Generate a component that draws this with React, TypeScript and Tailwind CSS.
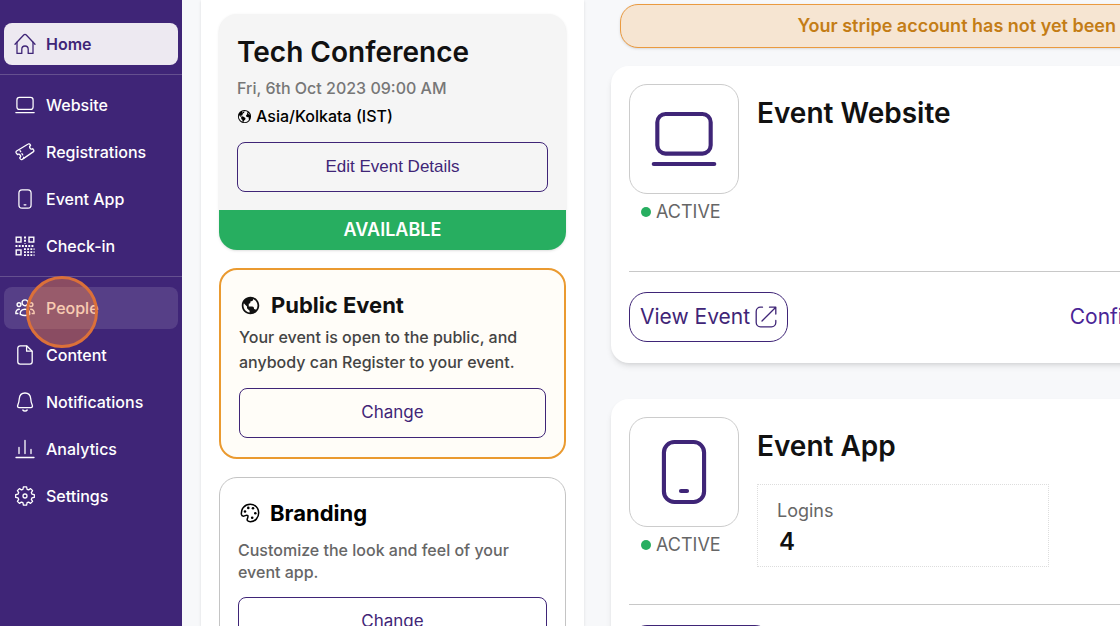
import React from "react";
import { IoEarth } from "react-icons/io5";
import { BiWorld } from "react-icons/bi";

const iconClass = "shrink-0 fill-none stroke-current";

const HomeIcon = () => (
	<svg width="22" height="22" viewBox="0 0 22 22" className={iconClass} strokeWidth="1.3" strokeLinejoin="round" strokeLinecap="round">
		<path d="M1 11.2 9.7 2a1.8 1.8 0 0 1 2.6 0L21 11.2" />
		<path d="M3 9.2V20.4h4.8v-4.2a3.2 3.2 0 0 1 6.4 0v4.2H19V9.2" />
	</svg>
);

const LaptopIcon = ({ size, stroke }: { size: number; stroke: number }) => (
	<svg width={size} height={size} viewBox="0 0 24 24" className={iconClass} strokeWidth={stroke} strokeLinecap="round">
		<rect x="2.3" y="2.9" width="19.4" height="14.4" rx="3" />
		<path d="M1 21.1h22" />
	</svg>
);

const PhoneIcon = ({ size, stroke }: { size: number; stroke: number }) => (
	<svg width={size} height={size} viewBox="0 0 24 24" className={iconClass} strokeWidth={stroke} strokeLinecap="round">
		<rect x="4.7" y="1.1" width="14.6" height="21.8" rx="3.8" />
		<path d="M10.9 18.9h2.2" />
	</svg>
);

const TicketIcon = () => (
	<svg width="20" height="20" viewBox="0 0 20 20" className={iconClass} strokeWidth="1.3" strokeLinejoin="round" strokeLinecap="round">
		<path d="M1.6 9 13.2 2a1.3 1.3 0 0 1 1.8.4l.6 1a1.9 1.9 0 0 0 2.1 3.3l.9 1.3a1.3 1.3 0 0 1-.4 1.9L7.2 17.4a1.3 1.3 0 0 1-1.8-.4l-.7-1.2a1.9 1.9 0 0 0-2.2-3.2l-1.3-1.8A1.3 1.3 0 0 1 1.6 9Z" />
		<path d="M5 8.6l.7 1.1M6.900 11.7l.8 1.2M8.600 15.200l.4.7" />
	</svg>
);

const QrIcon = () => (
	<svg width="20" height="20" viewBox="0 0 20 20" className={iconClass} strokeWidth="1.4">
		<rect x="1.2" y="1.2" width="4.8" height="4.8" />
		<rect x="14" y="1.2" width="4.8" height="4.8" />
		<rect x="1.2" y="14" width="4.8" height="4.8" />
		<path d="M10 .5v7" strokeWidth="2" strokeDasharray="2 1.2" />
		<path d="M.5 10h19M9 13.100h10.500M9 16.200h10.500M9 19.100h10.500" strokeWidth="1.800" strokeDasharray="1.900 1.300" />
	</svg>
);

const PeopleIcon = () => (
	<svg width="20" height="20" viewBox="0 0 20 20" className={iconClass} strokeWidth="1.4" strokeLinecap="round">
		<circle cx="10" cy="4.8" r="2.9" />
		<circle cx="4" cy="6.6" r="1.9" />
		<circle cx="16" cy="6.6" r="1.9" />
		<path d="M5.300 16.400c-.5-3.200 1.700-5.200 4.700-5.200s5.200 2 4.700 5.200c-2.600 1.300-6.800 1.300-9.400 0Z" />
		<path d="M4.300 11.200c-2.200 0-3.700 1.800-3.400 4.300h1.900M15.700 11.200c2.200 0 3.700 1.800 3.400 4.300h-1.900" />
	</svg>
);

const FileIcon = () => (
	<svg width="20" height="20" viewBox="0 0 20 20" className={iconClass} strokeWidth="1.3" strokeLinejoin="round">
		<path d="M11.6.8H5.200a2.400 2.400 0 0 0-2.400 2.400v13.600a2.400 2.400 0 0 0 2.400 2.400h9.600a2.400 2.400 0 0 0 2.400-2.400V6.200Z" />
		<path d="M11.6.8v5.400h5.600" />
	</svg>
);

const BellIcon = () => (
	<svg width="20" height="20" viewBox="0 0 20 20" className={iconClass} strokeWidth="1.3" strokeLinejoin="round" strokeLinecap="round">
		<path d="M10 1C6.600 1 4.600 3.500 4.300 6.500c-.2 3-.6 4.700-1.500 6.600-.7 1.500 0 2.500 1.400 2.500h11.600c1.400 0 2.100-1 1.400-2.500-.9-1.900-1.300-3.600-1.500-6.600C15.400 3.500 13.400 1 10 1Z" />
		<path d="M7.800 18c1 1.400 3.400 1.400 4.400 0" />
	</svg>
);

const ChartIcon = () => (
	<svg width="20" height="20" viewBox="0 0 20 20" className={iconClass} strokeWidth="1.3" strokeLinecap="round">
		<path d="M4 8.500v6M10 1.500v13M16 10.500v4M1 18.500h18" />
	</svg>
);

const GearIcon = () => (
	<svg width="20" height="20" viewBox="0 0 20 20" className={iconClass} strokeWidth="1.3" strokeLinejoin="round">
		<path d="M8.400.9h3.200l.5 2.400 1.500.6 2-1.300 2 2-1.300 2 .6 1.500 2.400.5v2.800l-2.400.5-.6 1.500 1.300 2-2 2-2-1.300-1.500.6-.5 2.400H8.400l-.5-2.400-1.500-.6-2 1.300-2-2 1.300-2-.6-1.500-2.400-.5V8.600l2.400-.5.600-1.500-1.300-2 2-2 2 1.300 1.500-.6Z" />
		<circle cx="10" cy="10" r="2" />
	</svg>
);

const PaletteIcon = () => (
	<svg width="20" height="20" viewBox="0 0 20 20" className={iconClass} strokeWidth="1.5" strokeLinejoin="round">
		<path d="M1.400 11.400C.8 5.600 4.800 1.300 10.200 1.300c4.900 0 8.500 3.700 8.500 8.500 0 5-3.600 8.900-8.300 8.900-2.600 0-3.800-1.400-3-3.100.5-1.100 1-2.200.3-3-1-1-2.300.2-3.700.5-1.300.2-2.400-.5-2.600-1.700Z" />
		<g className="fill-current stroke-none">
			<circle cx="5" cy="8.500" r="1.300" />
			<circle cx="8.300" cy="4.900" r="1.300" />
			<circle cx="13" cy="5.300" r="1.300" />
			<circle cx="15.300" cy="10.300" r="1.300" />
			<circle cx="12.200" cy="14.700" r="1.300" />
		</g>
	</svg>
);

const ExternalIcon = () => (
	<svg width="22" height="22" viewBox="0 0 22 22" className={iconClass} strokeWidth="1.3" strokeLinecap="round" strokeLinejoin="round">
		<path d="M7.500 1.200H5.500a4.300 4.300 0 0 0-4.300 4.300v11a4.300 4.300 0 0 0 4.300 4.300h11a4.300 4.300 0 0 0 4.300-4.300v-2" />
		<path d="M7 15 20.800 1.200M14.500 1.200h6.300V8" />
	</svg>
);

const NavItem = ({ icon, label, state = "" }: { icon: React.ReactNode; label: string; state?: string }) => (
	<a
		href="#"
		className={`mx-1 flex h-[42px] items-center gap-2 rounded-lg pl-2 text-base ${
			state === "active"
				? "bg-[#ede9f1] font-semibold text-[#3f2577]"
				: state === "hover"
				? "bg-white/12 font-medium text-white"
				: "font-medium text-white"
		}`}
	>
		<span className="flex w-[26px] justify-center">{icon}</span>
		{label}
	</a>
);

const Sidebar = () => (
	<nav className="relative w-[182px] shrink-0 bg-[#3f2577] pt-[23px]">
		<NavItem icon={<HomeIcon />} label="Home" state="active" />
		<hr className="my-[9px] border-[#65508f]" />
		<div className="flex flex-col gap-[5px]">
			<NavItem icon={<LaptopIcon size={20} stroke={1.5} />} label="Website" />
			<NavItem icon={<TicketIcon />} label="Registrations" />
			<NavItem icon={<PhoneIcon size={20} stroke={1.5} />} label="Event App" />
			<NavItem icon={<QrIcon />} label="Check-in" />
		</div>
		<hr className="mt-[9px] mb-[10px] border-[#65508f]" />
		<div className="flex flex-col gap-[5px]">
			<NavItem icon={<PeopleIcon />} label="People" state="hover" />
			<NavItem icon={<FileIcon />} label="Content" />
			<NavItem icon={<BellIcon />} label="Notifications" />
			<NavItem icon={<ChartIcon />} label="Analytics" />
			<NavItem icon={<GearIcon />} label="Settings" />
		</div>
		{/* click marker */}
		<div className="pointer-events-none absolute top-[276px] left-[26px] size-[72px] rounded-full border-[3px] border-[#db7039] bg-[#f28444]/42" />
	</nav>
);

const outlineButton =
	"block h-[50px] w-full rounded-lg border border-[#3f2577] text-[17px] text-[#3f2577]";

const DetailsColumn = () => (
	<section className="flex w-[383px] shrink-0 flex-col gap-[18px] bg-white px-[18px] pt-[14px] shadow-sm">
		<div className="shrink-0 overflow-hidden rounded-[18px] bg-[#f5f5f5] shadow">
			<div className="px-[18px] pt-5 pb-[18px]">
				<h1 className="text-[28px] leading-9 font-semibold text-[#111]">Tech Conference</h1>
				<p className="mt-1 text-base leading-7 font-medium text-[#777]">Fri, 6th Oct 2023 09:00 AM</p>
				<p className="flex items-center gap-1 text-base leading-7 font-medium text-black">
					<IoEarth className="size-[15px]" />
					Asia/Kolkata (IST)
				</p>
				<button type="button" className={`mt-3 font-["Liberation_Sans",sans-serif] ${outlineButton}`}>
					Edit Event Details
				</button>
			</div>
			<div className="bg-[#27ae60] text-center text-lg leading-10 font-semibold text-white">AVAILABLE</div>
		</div>

		<div className="shrink-0 rounded-[18px] border-2 border-[#ea9a30] bg-[#fffdf8] px-[18px] py-[19px]">
			<h2 className="flex items-center gap-[10px] text-[22px] leading-8 font-bold text-[#111]">
				<BiWorld className="ml-px size-[21px]" />
				Public Event
			</h2>
			<p className="mt-1 text-base leading-[25px] font-medium text-[#444]">
				Your event is open to the public, and anybody can Register to your event.
			</p>
			<button type="button" className={`mt-[13px] ${outlineButton}`}>
				Change
			</button>
		</div>

		<div className="shrink-0 rounded-[18px] border border-[#c4c4c4] bg-white px-[18px] py-[19px]">
			<h2 className="flex items-center gap-[10px] text-[22px] leading-8 font-bold text-black">
				<span className="pl-[2px]">
					<PaletteIcon />
				</span>
				Branding
			</h2>
			<p className="mt-[10px] text-base leading-[22px] font-medium text-[#666]">
				Customize the look and feel of your event app.
			</p>
			<button type="button" className={`mt-[14px] ${outlineButton}`}>
				Change
			</button>
		</div>
	</section>
);

const FeatureCard = ({
	title,
	icon,
	linkText,
	children,
}: {
	title: string;
	icon: React.ReactNode;
	linkText: string;
	children?: React.ReactNode;
}) => (
	<article className="-mr-[66px] rounded-[18px] bg-white p-[18px] pb-[21px] shadow-md">
		<div className="flex h-[188px] gap-[18px] border-b border-[#c8c8c8]">
			<div className="w-[110px]">
				<div className="flex h-[110px] items-center justify-center rounded-[18px] border border-[#ccc] text-[#3f2577]">
					{icon}
				</div>
				<p className="mt-1 flex items-center gap-[5px] pl-3 text-lg leading-7 text-[#666]">
					<span className="size-[10px] rounded-full bg-[#27ae60]" />
					ACTIVE
				</p>
			</div>
			<div className="pt-[11px]">
				<h2 className="text-[28px] leading-9 font-semibold text-[#111]">{title}</h2>
				{children}
			</div>
		</div>
		<div className="mt-5 flex items-center justify-between text-[21px]">
			<a href="#" className="flex h-[50px] items-center gap-[5px] rounded-[18px] border border-[#3f2577] px-[10px] text-[#3f2577]">
				{linkText}
				<ExternalIcon />
			</a>
			<a href="#" className="text-[#4a2596]">
				Configure
			</a>
		</div>
	</article>
);

const App = () => {
	return (
		<div className='flex h-screen overflow-hidden bg-[#f7f8fa] font-["Inter",sans-serif]'>
			<Sidebar />
			<div className="w-[19px] shrink-0" />
			<DetailsColumn />
			<main className="min-w-0 flex-1 overflow-hidden pt-1 pl-[27px]">
				<div
					role="alert"
					className="-mr-[66px] ml-[9px] flex h-11 items-center justify-end rounded-[18px] border border-[#ea9a40] bg-[#f6e5d2] pr-[69px] text-lg font-semibold whitespace-nowrap text-[#c47d16] shadow"
				>
					Your stripe account has not yet been
				</div>
				<div className="mt-[18px] flex flex-col gap-9">
					<FeatureCard title="Event Website" icon={<LaptopIcon size={66} stroke={1.5} />} linkText="View Event" />
					<FeatureCard title="Event App" icon={<PhoneIcon size={66} stroke={1.5} />} linkText="View App">
						<dl className="mt-5 w-[292px] border border-dotted border-[#ddd] px-[19px] pt-3 pb-2 text-lg">
							<dt className="leading-7 text-[#666]">Logins</dt>
							<dd className="pl-[2px] text-2xl leading-[33px] font-semibold text-[#111]">4</dd>
						</dl>
					</FeatureCard>
				</div>
			</main>
		</div>
	);
};

export default App;
